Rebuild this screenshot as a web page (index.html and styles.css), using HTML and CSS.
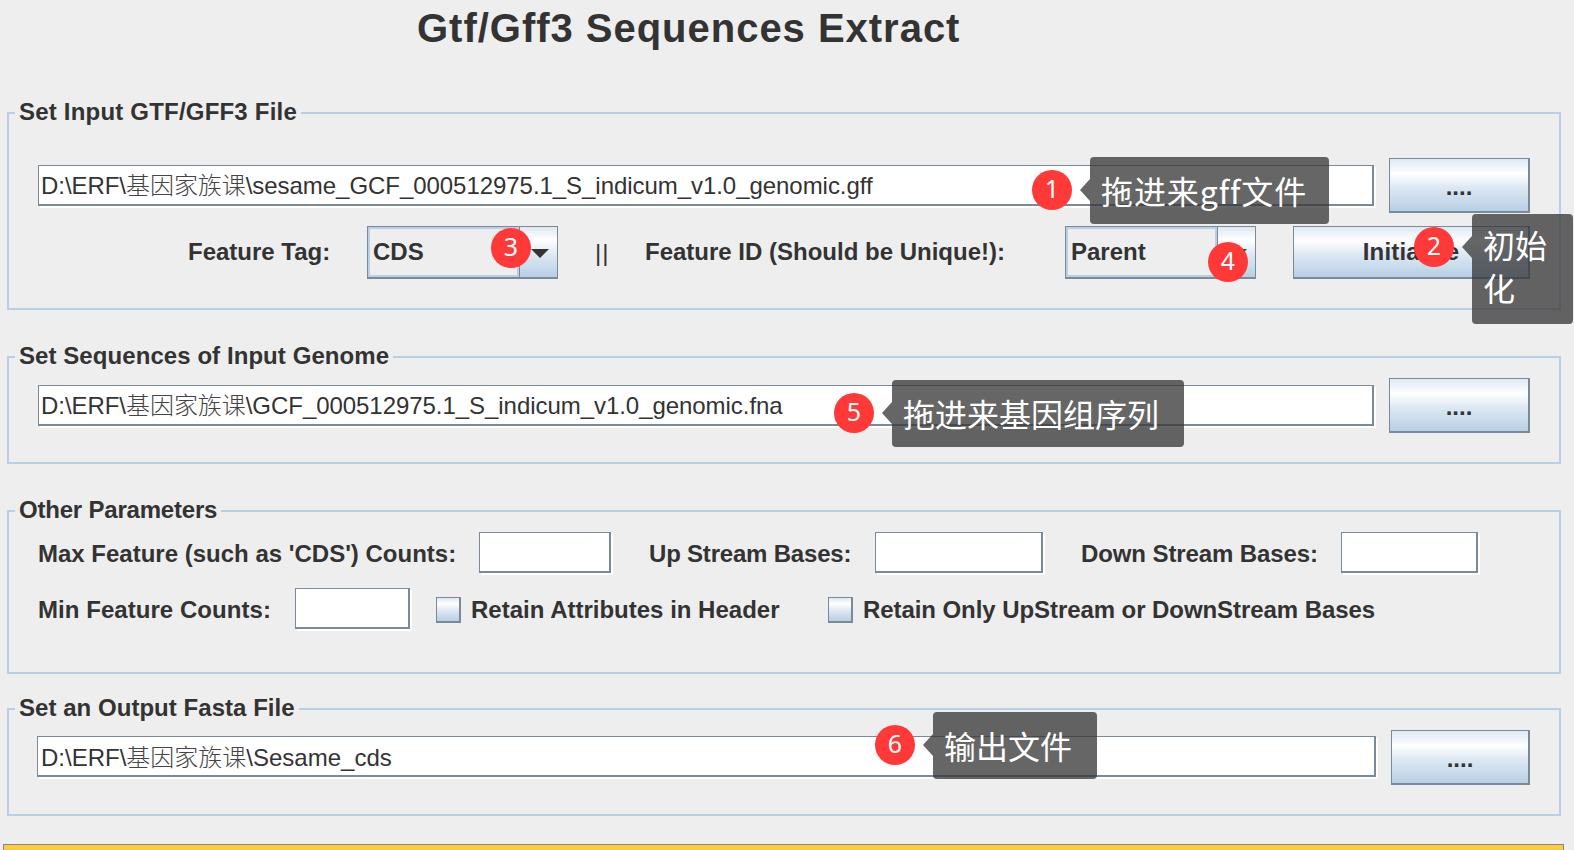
FILE: index.html
```html
<!DOCTYPE html>
<html lang="en">
<head>
<meta charset="utf-8">
<title>Gtf/Gff3 Sequences Extract</title>
<link rel="stylesheet" href="styles.css">
</head>
<body>
<main class="page">
  <h1 class="title">Gtf/Gff3 Sequences Extract</h1>

  <fieldset class="panel panel-gff">
    <legend>Set Input GTF/GFF3 File</legend>
    <div class="file-row">
      <div class="field field-grow">D:\ERF\<span class="cjk">基因家族课</span>\sesame_GCF_000512975.1_S_indicum_v1.0_genomic.gff</div>
      <div class="btn btn-browse">....</div>
    </div>
    <div class="tag-row">
      <span class="label lbl-tag">Feature Tag:</span>
      <div class="combo"><span class="combo-value">CDS</span><span class="combo-arrow"></span></div>
      <span class="sep">||</span>
      <span class="label lbl-id">Feature ID (Should be Unique!):</span>
      <div class="combo"><span class="combo-value">Parent</span><span class="combo-arrow"></span></div>
      <div class="btn btn-init">Initialize</div>
    </div>
  </fieldset>

  <fieldset class="panel panel-genome">
    <legend>Set Sequences of Input Genome</legend>
    <div class="file-row">
      <div class="field field-grow">D:\ERF\<span class="cjk">基因家族课</span>\GCF_000512975.1_S_indicum_v1.0_genomic.fna</div>
      <div class="btn btn-browse">....</div>
    </div>
  </fieldset>

  <fieldset class="panel panel-params">
    <legend>Other Parameters</legend>
    <div class="param-row">
      <span class="label lbl-max">Max Feature (such as 'CDS') Counts:</span>
      <div class="field field-num f-max"></div>
      <span class="label lbl-up">Up Stream Bases:</span>
      <div class="field field-num f-up"></div>
      <span class="label lbl-down">Down Stream Bases:</span>
      <div class="field field-num f-down"></div>
    </div>
    <div class="param-row">
      <span class="label lbl-min">Min Feature Counts:</span>
      <div class="field field-num f-min"></div>
      <span class="check c-attr"></span>
      <span class="label lbl-attr">Retain Attributes in Header</span>
      <span class="check"></span>
      <span class="label lbl-only">Retain Only UpStream or DownStream Bases</span>
    </div>
  </fieldset>

  <fieldset class="panel panel-output">
    <legend>Set an Output Fasta File</legend>
    <div class="file-row file-row-output">
      <div class="field field-grow">D:\ERF\<span class="cjk">基因家族课</span>\Sesame_cds</div>
      <div class="btn btn-browse btn-browse-output">....</div>
    </div>
  </fieldset>

  <div class="run-bar"></div>

  <span class="badge b1">1</span>
  <div class="tip t1">拖进来gff文件</div>
  <span class="badge b2">2</span>
  <div class="tip t2">初始化</div>
  <span class="badge b3">3</span>
  <span class="badge b4">4</span>
  <span class="badge b5">5</span>
  <div class="tip t5">拖进来基因组序列</div>
  <span class="badge b6">6</span>
  <div class="tip t6">输出文件</div>
</main>
</body>
</html>
```

FILE: styles.css
```css
* { box-sizing: border-box; }

html, body {
  margin: 0;
  padding: 0;
  height: 100%;
  overflow: hidden;
  background: #eeeeee;
}

.page {
  position: relative;
  width: 1574px;
  height: 850px;
  overflow: hidden;
  color: #333333;
  font-family: "Liberation Sans", "Noto Sans CJK SC", sans-serif;
  font-size: 24px;
}

.title {
  margin: 0;
  height: 99px;
  padding: 5px 0 0 417px;
  font-size: 40px;
  line-height: 46px;
  font-weight: 700;
  letter-spacing: 0.98px;
}

.panel {
  min-width: 0;
  width: 1554px;
  margin: 0 0 0 7px;
  border: 2px solid #b8cfe5;
  padding: 0 29px;
}

.panel legend {
  margin-right: auto;
  padding: 0 4px;
  height: 28px;
  line-height: 26px;
  font-weight: 700;
  margin-inline-start: -23px;
}

.panel-gff { padding-top: 31px; padding-bottom: 29px; }
.panel-genome { margin-top: 33px; padding-top: 7px; padding-bottom: 29px; }
.panel-params { margin-top: 33px; padding-top: 7px; padding-bottom: 40px; }
.panel-output { margin-top: 21px; padding-top: 7px; padding-bottom: 29px; }

.panel-gff legend { letter-spacing: 0.2px; }
.panel-genome legend { letter-spacing: 0.07px; }
.panel-params legend { letter-spacing: -0.2px; }
.panel-output legend { letter-spacing: 0.04px; }

.label {
  flex: none;
  font-weight: 700;
  white-space: nowrap;
}

/* file rows */
.file-row {
  display: flex;
  align-items: center;
  gap: 15px;
  height: 55px;
}

.file-row-output {
  margin-left: -1px;
}

.file-row-output .field-grow {
  margin-bottom: 2px;
  padding-left: 3px;
  line-height: 41px;
  letter-spacing: 0;
}

.field {
  background: #ffffff;
  border-style: solid;
  border-color: #7a8a99;
  border-width: 1px 2px 2px 1px;
  box-shadow: 2px 2px 0 #ffffff;
}

.field-grow {
  flex: 1;
  min-width: 0;
  height: 41px;
  padding: 0 0 0 2px;
  font-size: 24px;
  line-height: 40px;
  letter-spacing: -0.05px;
  white-space: nowrap;
  overflow: hidden;
}

.cjk {
  font-weight: 300;
  color: #444444;
}

.btn {
  flex: none;
  display: flex;
  align-items: center;
  justify-content: center;
  border: 1px solid #7a8a99;
  border-bottom-width: 2px;
  border-right-width: 2px;
  background: linear-gradient(#dde8f3 0%, #ffffff 28%, #dde8f3 55%, #b8cfe5 100%);
  font-weight: 700;
}

.btn-browse {
  width: 141px;
  height: 55px;
  padding-top: 3px;
}

.btn-browse-output {
  width: 139px;
}

/* feature row */
.tag-row {
  display: flex;
  align-items: center;
  height: 53px;
  margin-top: 13px;
}

.tag-row .label { padding-bottom: 2px; }

.lbl-tag { width: 179px; margin-left: 150px; }
.lbl-id { width: 420px; }

.combo {
  flex: none;
  display: flex;
  width: 191px;
  height: 53px;
  border: 1px solid #7a8a99;
  border-bottom-width: 2px;
}

.combo-value {
  flex: 1;
  border: 2px solid #b8cfe5;
  padding-left: 3px;
  font-weight: 700;
  line-height: 46px;
}

.combo-arrow {
  flex: none;
  position: relative;
  width: 38px;
  border-left: 1px solid #7a8a99;
  background: linear-gradient(#dde8f3 0%, #ffffff 25%, #dde8f3 55%, #b8cfe5 100%);
}

.combo-arrow::after {
  content: "";
  position: absolute;
  left: 11px;
  top: 22px;
  border-style: solid;
  border-width: 9px 9px 0;
  border-color: #333333 transparent transparent;
}

.sep {
  flex: none;
  width: 87px;
  padding-left: 37px;
  font-size: 24px;
  letter-spacing: 1px;
}

.btn-init {
  width: 237px;
  height: 53px;
  margin-left: 37px;
  letter-spacing: 0.2px;
}

/* parameters */
.param-row {
  display: flex;
  align-items: center;
  height: 44px;
}

.param-row + .param-row { margin-top: 12px; }

.field-num {
  flex: none;
  height: 41px;
  margin-bottom: 4px;
  box-shadow: 2px 2px 0 #ffffff, inset 0 0 0 1px #ffffff;
}

.lbl-max { width: 441px; }
.f-max { width: 132px; }
.lbl-up { width: 226px; margin-left: 38px; letter-spacing: -0.2px; }
.f-up { width: 168px; }
.lbl-down { width: 260px; margin-left: 38px; letter-spacing: -0.1px; }
.f-down { width: 137px; }
.lbl-min { width: 257px; letter-spacing: 0.05px; }
.f-min { width: 115px; }

.check {
  flex: none;
  width: 25px;
  height: 26px;
  border: 1px solid #7a8a99;
  border-bottom-width: 2px;
  border-right-width: 2px;
  background: linear-gradient(#dde8f3 0%, #ffffff 25%, #dde8f3 55%, #b8cfe5 100%);
}

.c-attr { margin-left: 26px; }
.lbl-attr { width: 357px; margin-left: 10px; }
.lbl-only { margin-left: 10px; letter-spacing: -0.07px; }

/* bottom bar */
.run-bar {
  width: 1561px;
  height: 40px;
  margin: 28px 0 0 3px;
  border: 1px solid #7a8a99;
  background: #ffcc33;
}

/* annotations lying over the form */
.badge {
  position: absolute;
  width: 40px;
  height: 40px;
  border-radius: 50%;
  background: #ff3838;
  color: #ffffff;
  font-family: "Noto Sans", sans-serif;
  font-size: 25px;
  line-height: 36px;
  text-align: center;
}

.b1 { left: 1032px; top: 170px; }
.b2 { left: 1414px; top: 227px; }
.b3 { left: 491px; top: 228px; }
.b4 { left: 1208px; top: 242px; }
.b5 { left: 834px; top: 393px; }
.b6 { left: 875px; top: 725px; }

.tip {
  position: absolute;
  padding: 11px 11px 12px;
  border-radius: 4px;
  background: rgba(54, 54, 54, 0.76);
  color: #ffffff;
  font-family: "Noto Sans CJK SC", "Liberation Sans", sans-serif;
  font-size: 32px;
  line-height: 44px;
}

.tip::before {
  content: "";
  position: absolute;
  left: -10px;
  top: 22px;
  border-style: solid;
  border-width: 11px 10px 11px 0;
  border-color: transparent rgba(54, 54, 54, 0.76) transparent transparent;
}

.t1 { left: 1090px; top: 157px; width: 239px; height: 67px; white-space: nowrap; letter-spacing: 0.9px; }
.t2 { left: 1472px; top: 214px; width: 101px; height: 110px; padding-top: 9px; line-height: 43px; }
.t5 { left: 892px; top: 380px; width: 292px; height: 67px; white-space: nowrap; }
.t6 { left: 933px; top: 712px; width: 164px; height: 67px; white-space: nowrap; }
```
